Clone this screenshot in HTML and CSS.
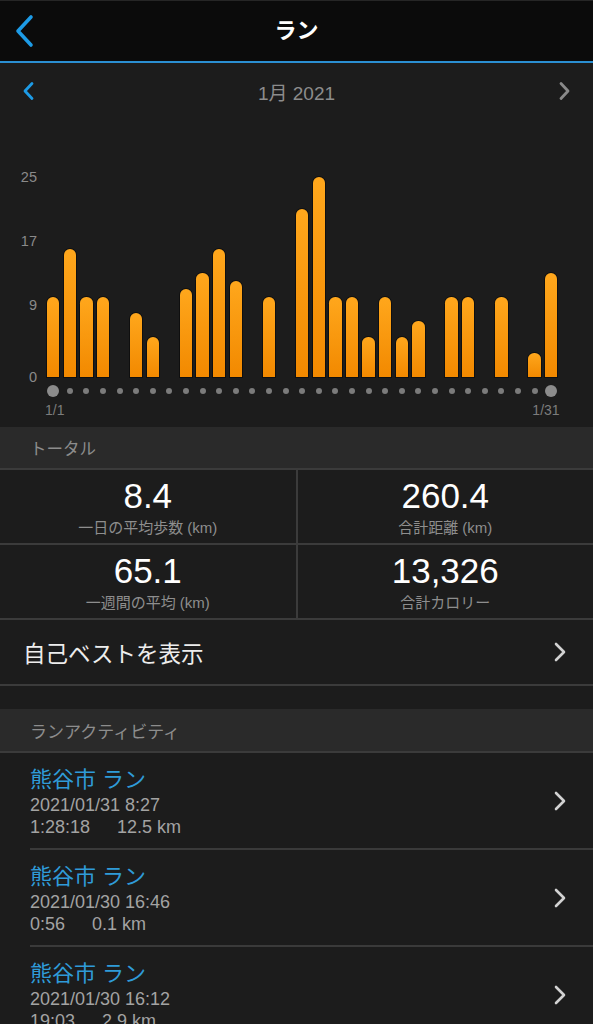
FILE: index.html
```html
<!DOCTYPE html>
<html lang="ja">
<head>
<meta charset="utf-8">
<title>ラン</title>
<link rel="stylesheet" href="styles.css">
</head>
<body>
<div class="screen">
  <header class="topbar">
    <svg class="back" width="22" height="34" viewBox="0 0 22 34"><polyline points="16,3 3,17 16,31" fill="none" stroke="#1d9be6" stroke-width="3.6" stroke-linecap="round" stroke-linejoin="round"/></svg>
    <h1 class="title">ラン</h1>
  </header>

  <div class="monthnav">
    <svg class="mchev" width="14" height="20" viewBox="0 0 14 20"><polyline points="10,2.5 3,10 10,17.5" fill="none" stroke="#1d9be6" stroke-width="2.8" stroke-linecap="round" stroke-linejoin="round"/></svg>
    <span class="month">1月 2021</span>
    <svg class="mchev" width="14" height="20" viewBox="0 0 14 20"><polyline points="4,2.5 11,10 4,17.5" fill="none" stroke="#8a8a8a" stroke-width="2.8" stroke-linecap="round" stroke-linejoin="round"/></svg>
  </div>

  <section class="chart">
    <div class="plot">
      <div class="yaxis">
        <span class="ylab" style="bottom:200px">25</span>
        <span class="ylab" style="bottom:136px">17</span>
        <span class="ylab" style="bottom:72px">9</span>
        <span class="ylab" style="bottom:0px">0</span>
      </div>
      <div class="col"><div class="bar" style="height:80px"></div></div>
      <div class="col"><div class="bar" style="height:128px"></div></div>
      <div class="col"><div class="bar" style="height:80px"></div></div>
      <div class="col"><div class="bar" style="height:80px"></div></div>
      <div class="col"></div>
      <div class="col"><div class="bar" style="height:64px"></div></div>
      <div class="col"><div class="bar" style="height:40px"></div></div>
      <div class="col"></div>
      <div class="col"><div class="bar" style="height:88px"></div></div>
      <div class="col"><div class="bar" style="height:104px"></div></div>
      <div class="col"><div class="bar" style="height:128px"></div></div>
      <div class="col"><div class="bar" style="height:96px"></div></div>
      <div class="col"></div>
      <div class="col"><div class="bar" style="height:80px"></div></div>
      <div class="col"></div>
      <div class="col"><div class="bar" style="height:168px"></div></div>
      <div class="col"><div class="bar" style="height:200px"></div></div>
      <div class="col"><div class="bar" style="height:80px"></div></div>
      <div class="col"><div class="bar" style="height:80px"></div></div>
      <div class="col"><div class="bar" style="height:40px"></div></div>
      <div class="col"><div class="bar" style="height:80px"></div></div>
      <div class="col"><div class="bar" style="height:40px"></div></div>
      <div class="col"><div class="bar" style="height:56px"></div></div>
      <div class="col"></div>
      <div class="col"><div class="bar" style="height:80px"></div></div>
      <div class="col"><div class="bar" style="height:80px"></div></div>
      <div class="col"></div>
      <div class="col"><div class="bar" style="height:80px"></div></div>
      <div class="col"></div>
      <div class="col"><div class="bar" style="height:24px"></div></div>
      <div class="col"><div class="bar" style="height:104px"></div></div>
    </div>
    <div class="dots">
      <span class="dcell"><i class="dot big"></i></span>
      <span class="dcell"><i class="dot"></i></span>
      <span class="dcell"><i class="dot"></i></span>
      <span class="dcell"><i class="dot"></i></span>
      <span class="dcell"><i class="dot"></i></span>
      <span class="dcell"><i class="dot"></i></span>
      <span class="dcell"><i class="dot"></i></span>
      <span class="dcell"><i class="dot"></i></span>
      <span class="dcell"><i class="dot"></i></span>
      <span class="dcell"><i class="dot"></i></span>
      <span class="dcell"><i class="dot"></i></span>
      <span class="dcell"><i class="dot"></i></span>
      <span class="dcell"><i class="dot"></i></span>
      <span class="dcell"><i class="dot"></i></span>
      <span class="dcell"><i class="dot"></i></span>
      <span class="dcell"><i class="dot"></i></span>
      <span class="dcell"><i class="dot"></i></span>
      <span class="dcell"><i class="dot"></i></span>
      <span class="dcell"><i class="dot"></i></span>
      <span class="dcell"><i class="dot"></i></span>
      <span class="dcell"><i class="dot"></i></span>
      <span class="dcell"><i class="dot"></i></span>
      <span class="dcell"><i class="dot"></i></span>
      <span class="dcell"><i class="dot"></i></span>
      <span class="dcell"><i class="dot"></i></span>
      <span class="dcell"><i class="dot"></i></span>
      <span class="dcell"><i class="dot"></i></span>
      <span class="dcell"><i class="dot"></i></span>
      <span class="dcell"><i class="dot"></i></span>
      <span class="dcell"><i class="dot"></i></span>
      <span class="dcell"><i class="dot big"></i></span>
    </div>
    <div class="xlabels">
      <span class="xlab">1/1</span>
      <span class="xlab">1/31</span>
    </div>
  </section>

  <div class="sechead">トータル</div>
  <div class="totals">
    <div class="cell"><div class="val">8.4</div><div class="lab">一日の平均歩数 (km)</div></div>
    <div class="cell"><div class="val">260.4</div><div class="lab">合計距離 (km)</div></div>
    <div class="cell"><div class="val">65.1</div><div class="lab">一週間の平均 (km)</div></div>
    <div class="cell"><div class="val">13,326</div><div class="lab">合計カロリー</div></div>
  </div>

  <div class="bestrow">
    <span class="besttext">自己ベストを表示</span>
    <svg class="chev" width="14" height="22" viewBox="0 0 14 22"><polyline points="3,3 11,11 3,19" fill="none" stroke="#d2d2d2" stroke-width="2.6" stroke-linecap="round" stroke-linejoin="round"/></svg>
  </div>

  <div class="spacer"></div>

  <div class="sechead act">ランアクティビティ</div>
  <ul class="acts">
    <li class="item">
      <div class="info">
        <div class="ititle">熊谷市 ラン</div>
        <div class="isub">2021/01/31 8:27</div>
        <div class="isub"><span class="dur">1:28:18</span><span>12.5 km</span></div>
      </div>
      <svg class="chev" width="14" height="22" viewBox="0 0 14 22"><polyline points="3,3 11,11 3,19" fill="none" stroke="#d2d2d2" stroke-width="2.6" stroke-linecap="round" stroke-linejoin="round"/></svg>
    </li>
    <li class="item">
      <div class="info">
        <div class="ititle">熊谷市 ラン</div>
        <div class="isub">2021/01/30 16:46</div>
        <div class="isub"><span class="dur">0:56</span><span>0.1 km</span></div>
      </div>
      <svg class="chev" width="14" height="22" viewBox="0 0 14 22"><polyline points="3,3 11,11 3,19" fill="none" stroke="#d2d2d2" stroke-width="2.6" stroke-linecap="round" stroke-linejoin="round"/></svg>
    </li>
    <li class="item">
      <div class="info">
        <div class="ititle">熊谷市 ラン</div>
        <div class="isub">2021/01/30 16:12</div>
        <div class="isub"><span class="dur">19:03</span><span>2.9 km</span></div>
      </div>
      <svg class="chev" width="14" height="22" viewBox="0 0 14 22"><polyline points="3,3 11,11 3,19" fill="none" stroke="#d2d2d2" stroke-width="2.6" stroke-linecap="round" stroke-linejoin="round"/></svg>
    </li>
  </ul>
</div>
</body>
</html>
```

FILE: styles.css
```css
* { box-sizing: border-box; }
html, body { margin: 0; padding: 0; background: #1c1c1c; }
body {
  font-family: "Liberation Sans", "Noto Sans CJK JP", sans-serif;
  color: #fff;
}
.screen { width: 593px; background: #1c1c1c; overflow: hidden; }

.topbar {
  height: 63px;
  background: #0b0b0b;
  border-top: 1px solid #262626;
  border-bottom: 2px solid #2b8fd2;
  display: flex;
  align-items: center;
  justify-content: center;
  position: relative;
}
.back { position: absolute; left: 15px; top: 13px; }
.title {
  margin: 0;
  font-size: 22px;
  font-weight: bold;
  color: #fff;
  line-height: 28px;
}

.monthnav {
  height: 56px;
  display: flex;
  align-items: center;
  justify-content: space-between;
  padding: 0 22px 0 22px;
}
.month { font-size: 19px; color: #8c8c8c; }

.chart { padding-bottom: 11px; }
.plot {
  position: relative;
  height: 258px;
  display: flex;
  align-items: flex-end;
  padding-left: 45px;
}
.yaxis { position: absolute; left: 0; top: 0; bottom: 0; width: 37px; }
.ylab {
  position: absolute;
  right: 0;
  font-size: 14.5px;
  line-height: 16px;
  color: #8a8a8a;
  transform: translateY(50%);
}
.col {
  flex: 0 0 16.6px;
  display: flex;
  justify-content: center;
  align-items: flex-end;
}
.bar {
  width: 12.4px;
  border-radius: 6.2px 6.2px 0 0;
  background: linear-gradient(#ffa71c, #f28900);
  box-shadow: 0 0 0 1px rgba(0,0,0,0.45);
}

.dots {
  height: 27px;
  display: flex;
  align-items: center;
  padding-left: 45px;
}
.dcell { flex: 0 0 16.6px; display: flex; justify-content: center; }
.dot { display: block; width: 6px; height: 6px; border-radius: 50%; background: #7b7b7b; }
.dot.big { width: 12px; height: 12px; background: #8c8c8c; }

.xlabels {
  display: flex;
  justify-content: space-between;
  width: 514.6px;
  margin-left: 45px;
  height: 12px;
  line-height: 12px;
}
.xlab {
  flex: 0 0 16.6px;
  display: flex;
  justify-content: center;
  font-size: 14px;
  color: #7c7c7c;
  white-space: nowrap;
}

.sechead {
  height: 43px;
  background: #2a2a2a;
  border-bottom: 2px solid #3b3b3b;
  padding-left: 30px;
  display: flex;
  align-items: center;
  font-size: 16.5px;
  color: #8d8d8d;
}
.sechead.act { height: 44px; font-size: 17px; }

.totals {
  display: grid;
  grid-template-columns: 1fr 1fr;
  gap: 2px;
  background: #3b3b3b;
  border-bottom: 2px solid #3b3b3b;
}
.cell {
  background: #1c1c1c;
  height: 73px;
  display: flex;
  flex-direction: column;
  align-items: center;
}
.val { font-size: 35px; line-height: 36px; margin-top: 8px; color: #fff; }
.lab { font-size: 15px; line-height: 18px; margin-top: 5px; color: #8e8e8e; }

.bestrow {
  height: 66px;
  border-bottom: 2px solid #3b3b3b;
  display: flex;
  align-items: center;
  justify-content: space-between;
  padding: 0 26px 0 23px;
}
.besttext { font-size: 22.5px; color: #ededed; }

.spacer { height: 23px; }

.acts { list-style: none; margin: 0; padding: 0 0 0 30px; }
.item {
  height: 97px;
  border-bottom: 2px solid #3a3a3a;
  display: flex;
  align-items: center;
  justify-content: space-between;
  padding-right: 26px;
}
.info { display: flex; flex-direction: column; padding-top: 3px; }
.ititle { font-size: 22px; line-height: 28px; color: #2f9bd8; }
.isub { font-size: 18px; line-height: 22px; color: #a3a3a3; display: flex; }
.dur { margin-right: 27px; }
```
